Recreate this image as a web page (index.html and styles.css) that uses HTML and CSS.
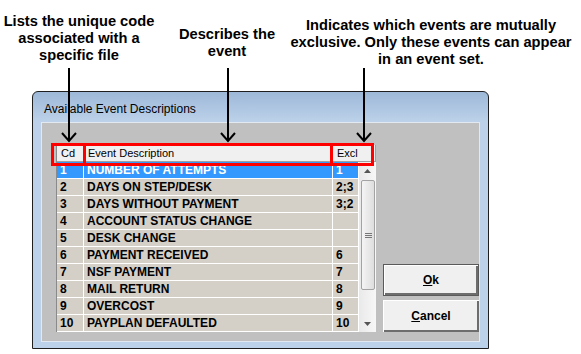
FILE: index.html
```html
<!DOCTYPE html>
<html lang="en">
  <head>
    <meta charset="UTF-8" />
    <meta name="viewport" content="width=device-width, initial-scale=1.0" />
    <title>Available Event Descriptions</title>
    <link rel="stylesheet" href="styles.css">
  </head>

  <body>
    <div class="page">
      <!-- callouts above the dialog -->
      <div class="note note-code">Lists the unique code<br>associated with a<br>specific file</div>
      <div class="note note-desc">Describes the<br>event</div>
      <div class="note note-excl">Indicates which events are mutually<br>exclusive. Only these events can appear<br>in an event set.</div>

      <div class="dialog">
        <div class="title">Available Event Descriptions</div>
        <div class="panel">
          <div class="list">
            <div class="list-head">
              <div class="head-cell">Cd</div>
              <div class="head-cell">Event Description</div>
              <div class="head-cell">Excl</div>
            </div>
            <div class="list-body">
              <div class="rows">
                <div class="row selected"><span>1</span><span>NUMBER OF ATTEMPTS</span><span>1</span></div>
                <div class="row"><span>2</span><span>DAYS ON STEP/DESK</span><span>2;3</span></div>
                <div class="row"><span>3</span><span>DAYS WITHOUT PAYMENT</span><span>3;2</span></div>
                <div class="row"><span>4</span><span>ACCOUNT STATUS CHANGE</span><span></span></div>
                <div class="row"><span>5</span><span>DESK CHANGE</span><span></span></div>
                <div class="row"><span>6</span><span>PAYMENT RECEIVED</span><span>6</span></div>
                <div class="row"><span>7</span><span>NSF PAYMENT</span><span>7</span></div>
                <div class="row"><span>8</span><span>MAIL RETURN</span><span>8</span></div>
                <div class="row"><span>9</span><span>OVERCOST</span><span>9</span></div>
                <div class="row"><span>10</span><span>PAYPLAN DEFAULTED</span><span>10</span></div>
              </div>
              <div class="scrollbar">
                <div class="sb-arrow">
                  <svg width="7" height="4" viewBox="0 0 7 4"><polygon points="0,4 3.5,0 7,4" fill="#555"/></svg>
                </div>
                <div class="sb-thumb">
                  <svg width="7" height="5" viewBox="0 0 7 5">
                    <rect x="0" y="0" width="7" height="1" fill="#777"/>
                    <rect x="0" y="2" width="7" height="1" fill="#777"/>
                    <rect x="0" y="4" width="7" height="1" fill="#777"/>
                  </svg>
                </div>
                <div class="sb-track"></div>
                <div class="sb-arrow">
                  <svg width="7" height="4" viewBox="0 0 7 4"><polygon points="0,0 7,0 3.5,4" fill="#555"/></svg>
                </div>
              </div>
            </div>
          </div>

          <div class="buttons">
            <button class="btn btn-default"><u>O</u>k</button>
            <button class="btn"><u>C</u>ancel</button>
          </div>
        </div>
      </div>

      <!-- red highlight boxes and arrows drawn over the screenshot -->
      <div class="mark mark-code"></div>
      <div class="mark mark-desc"></div>
      <div class="mark mark-excl"></div>

      <svg class="arrows" width="581" height="354" viewBox="0 0 581 354">
        <g fill="none" stroke="#000" stroke-width="2">
          <path d="M69 68 V141 M62 133 L69 141 L76 133" />
          <path d="M228 68 V141 M221 133 L228 141 L235 133" />
          <path d="M364 68 V141 M357 133 L364 141 L371 133" />
        </g>
      </svg>
    </div>
  </body>
</html>
```

FILE: styles.css
```css
* {
  margin: 0;
  padding: 0;
  box-sizing: border-box;
}

body {
  font-family: "Liberation Sans", Arial, sans-serif;
  background-color: #fff;
  color: #000;
}

.page {
  position: relative;
  width: 581px;
  height: 354px;
  overflow: hidden;
  padding: 91px 0 0 32px;
}

/* callouts */
.note {
  position: absolute;
  font-size: 11pt;
  font-weight: bold;
  line-height: 17px;
  text-align: center;
  white-space: nowrap;
}

.note-code {
  left: 0;
  top: 13px;
  width: 158px;
}

.note-desc {
  left: 177px;
  top: 26px;
  width: 100px;
}

.note-excl {
  left: 281px;
  top: 17px;
  width: 300px;
}

/* dialog window */
.dialog {
  width: 457px;
  height: 258px;
  display: flex;
  flex-direction: column;
  border: 1px solid #1f1f1f;
  border-radius: 6px 6px 0 0;
  padding: 0 8px 6px 8px;
  background: linear-gradient(#9db8d8, #bdd2ea 30px, #bcd2ea);
}

.title {
  height: 30px;
  padding: 10px 0 0 3px;
  font-size: 12px;
  line-height: 14px;
}

.panel {
  flex: 1;
  display: flex;
  align-items: flex-end;
  background-color: #c0c0c0;
  border: 1px solid #e3e9f0;
  padding: 0 0 9px 14px;
}

/* list */
.list {
  width: 320px;
  border-left: 1px solid #8a8a8a;
}

.list-head {
  display: grid;
  grid-template-columns: 27px 249px 43px;
}

.head-cell {
  height: 17px;
  padding: 1px 0 0 4px;
  background-color: #f0f0f0;
  border-right: 1px solid #a0a0a0;
  border-bottom: 1px solid #a0a0a0;
  font-size: 11px;
  line-height: 15px;
}

.list-body {
  display: flex;
}

.rows {
  width: 302px;
}

.row {
  display: grid;
  grid-template-columns: 27px 249px 26px;
}

.row span {
  height: 17px;
  padding-left: 3px;
  background-color: #d4d0c8;
  border-right: 1px solid #fff;
  border-bottom: 1px solid #fff;
  font-size: 12px;
  font-weight: bold;
  line-height: 16px;
  white-space: nowrap;
  overflow: hidden;
}

.row.selected span {
  background-color: #3399ff;
  color: #fff;
}

/* scrollbar */
.scrollbar {
  width: 17px;
  display: flex;
  flex-direction: column;
  background: linear-gradient(to right, #e9e9e9, #f7f7f7);
}

.sb-arrow {
  height: 17px;
  display: flex;
  justify-content: center;
  align-items: center;
}

.sb-arrow svg {
  display: block;
}

.sb-thumb {
  height: 110px;
  margin: 1px 1px 0 2px;
  border: 1px solid #a3a3a3;
  border-radius: 2px;
  background: linear-gradient(to right, #f4f4f4, #dedede);
  display: flex;
  justify-content: center;
  align-items: center;
}

.sb-track {
  flex: 1;
}

/* buttons */
.buttons {
  display: flex;
  flex-direction: column;
  gap: 4px;
  margin-left: 7px;
}

.btn {
  width: 96px;
  height: 32px;
  border: none;
  background-color: #f0f0f0;
  box-shadow: inset 1px 1px 0 #fff, inset -2px -2px 0 #6d6d6d;
  font-family: "Liberation Sans", Arial, sans-serif;
  font-size: 12px;
  font-weight: bold;
  color: #000;
}

.btn-default {
  border: 1px solid #5a5a5a;
}

/* annotation overlays */
.mark {
  position: absolute;
  top: 143px;
  height: 23px;
  border: 3px solid #ff0000;
}

.mark-code {
  left: 51px;
  width: 35px;
}

.mark-desc {
  left: 83px;
  width: 250px;
}

.mark-excl {
  left: 330px;
  width: 44px;
}

.arrows {
  position: absolute;
  left: 0;
  top: 0;
  pointer-events: none;
}
```
